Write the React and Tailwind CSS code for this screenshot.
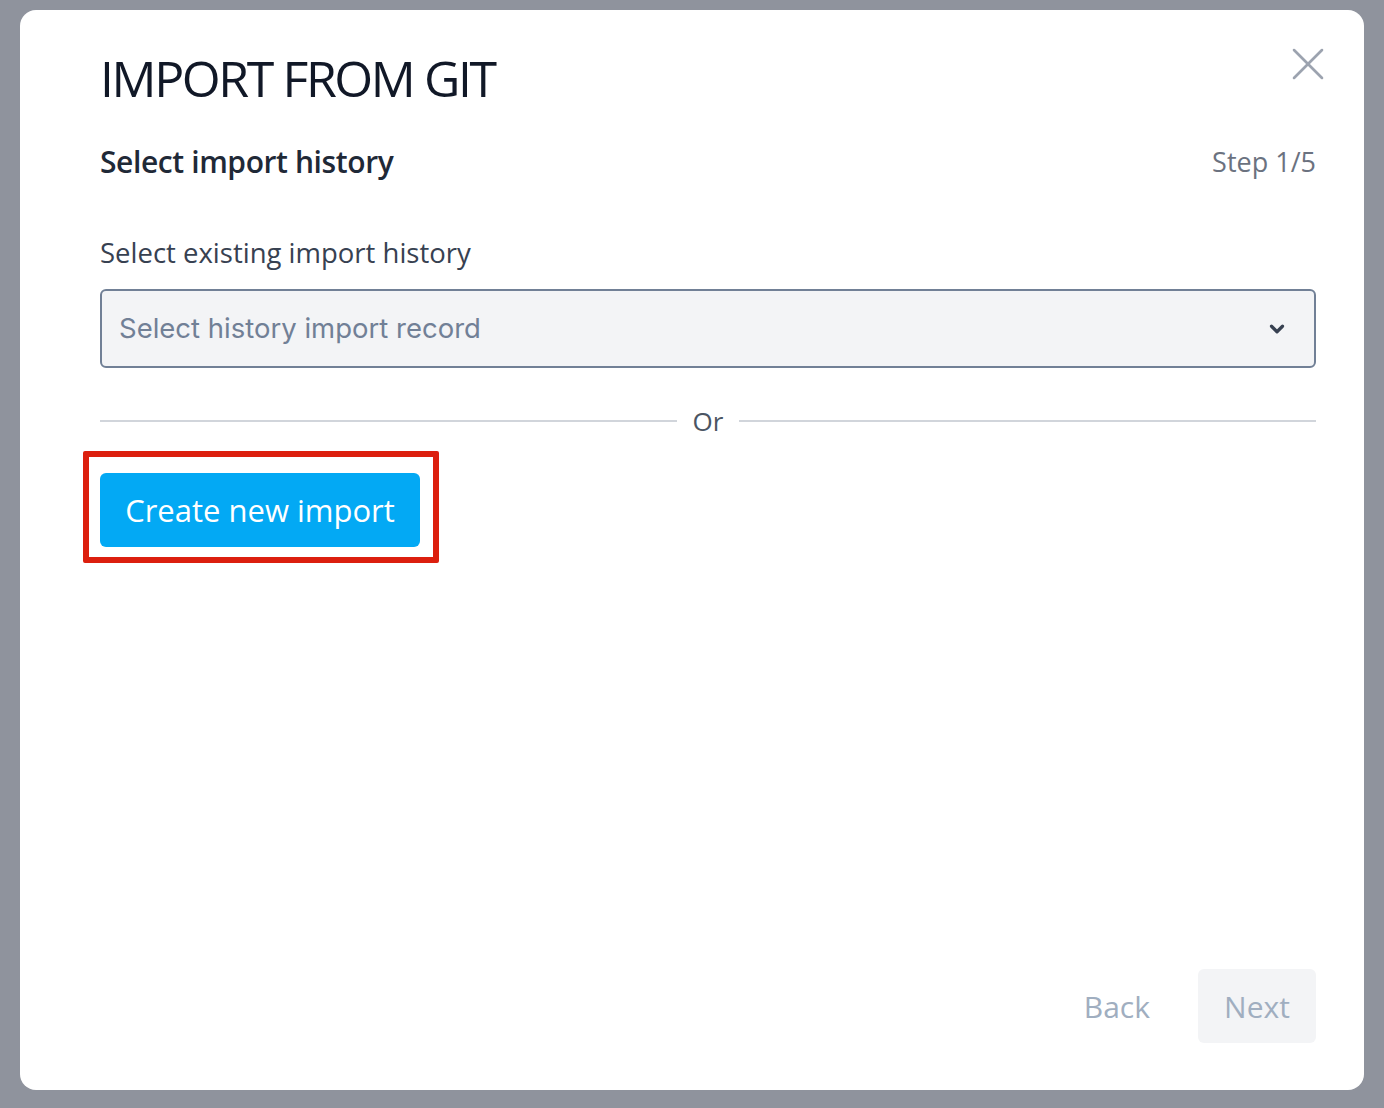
import { X, ChevronDown } from "lucide-react";

const FONT = { fontFamily: '"Open Sans", "Noto Sans", sans-serif' };

export default function App() {
  return (
    <div className="min-h-[1108px] w-full bg-[#8f939d] pt-[10px] pl-[20px] pr-[20px]" style={FONT}>
      <div className="relative flex h-[1080px] flex-col rounded-[16px] bg-white pl-[80px] pr-[48px]">
        <button className="absolute right-[28px] top-[26px] text-[#9ca3af]">
          <X size={56} strokeWidth={1.1} />
        </button>

        <h1 className="mt-[34px] text-[50px] leading-[68px] font-normal tracking-[-2.4px] text-[#111827]">IMPORT FROM GIT</h1>

        <div className="mt-[28px] flex items-center justify-between">
          <h2 className="text-[30px] leading-[44px] font-semibold tracking-[-0.4px] text-[#1f2937]">Select import history</h2>
          <span className="text-[27px] leading-[44px] text-[#6b7280]">Step 1/5</span>
        </div>

        <label className="mt-[50px] text-[27.5px] leading-[38px] text-[#374151]">Select existing import history</label>

        <div className="mt-[17px] flex h-[79px] items-center justify-between rounded-[6px] border-2 border-[#718096] bg-[#f3f4f6] pl-[17px] pr-[26px]">
          <span className="text-[27.5px] text-[#718096]" style={{ fontFamily: '"Inter", "Liberation Sans", sans-serif' }}>Select history import record</span>
          <ChevronDown size={22} strokeWidth={3.5} className="text-[#374151]" />
        </div>

        <div className="mt-[35px] flex items-center gap-[16px]">
          <div className="h-[2px] flex-1 bg-[#d1d5db]" />
          <span className="text-[26px] leading-[36px] text-[#4b5563]">Or</span>
          <div className="h-[2px] flex-1 bg-[#d1d5db]" />
        </div>

        <div className="mt-[34px] flex">
          <div className="relative">
            <button className="h-[74px] w-[320px] rounded-[6px] bg-[#03a9f4] text-[31px] text-white">Create new import</button>
            <div className="absolute -left-[17px] -right-[19px] -top-[22px] -bottom-[16px] rounded-[2px] border-[6px] border-[#dc1f0e]" />
          </div>
        </div>

        <div className="mt-auto mb-[47px] flex items-center justify-end gap-[48px]">
          <button className="text-[30px] text-[#a0aec0]">Back</button>
          <button className="h-[74px] w-[118px] rounded-[6px] bg-[#f3f4f6] text-[30px] text-[#a0aec0]">Next</button>
        </div>
      </div>
    </div>
  );
}
